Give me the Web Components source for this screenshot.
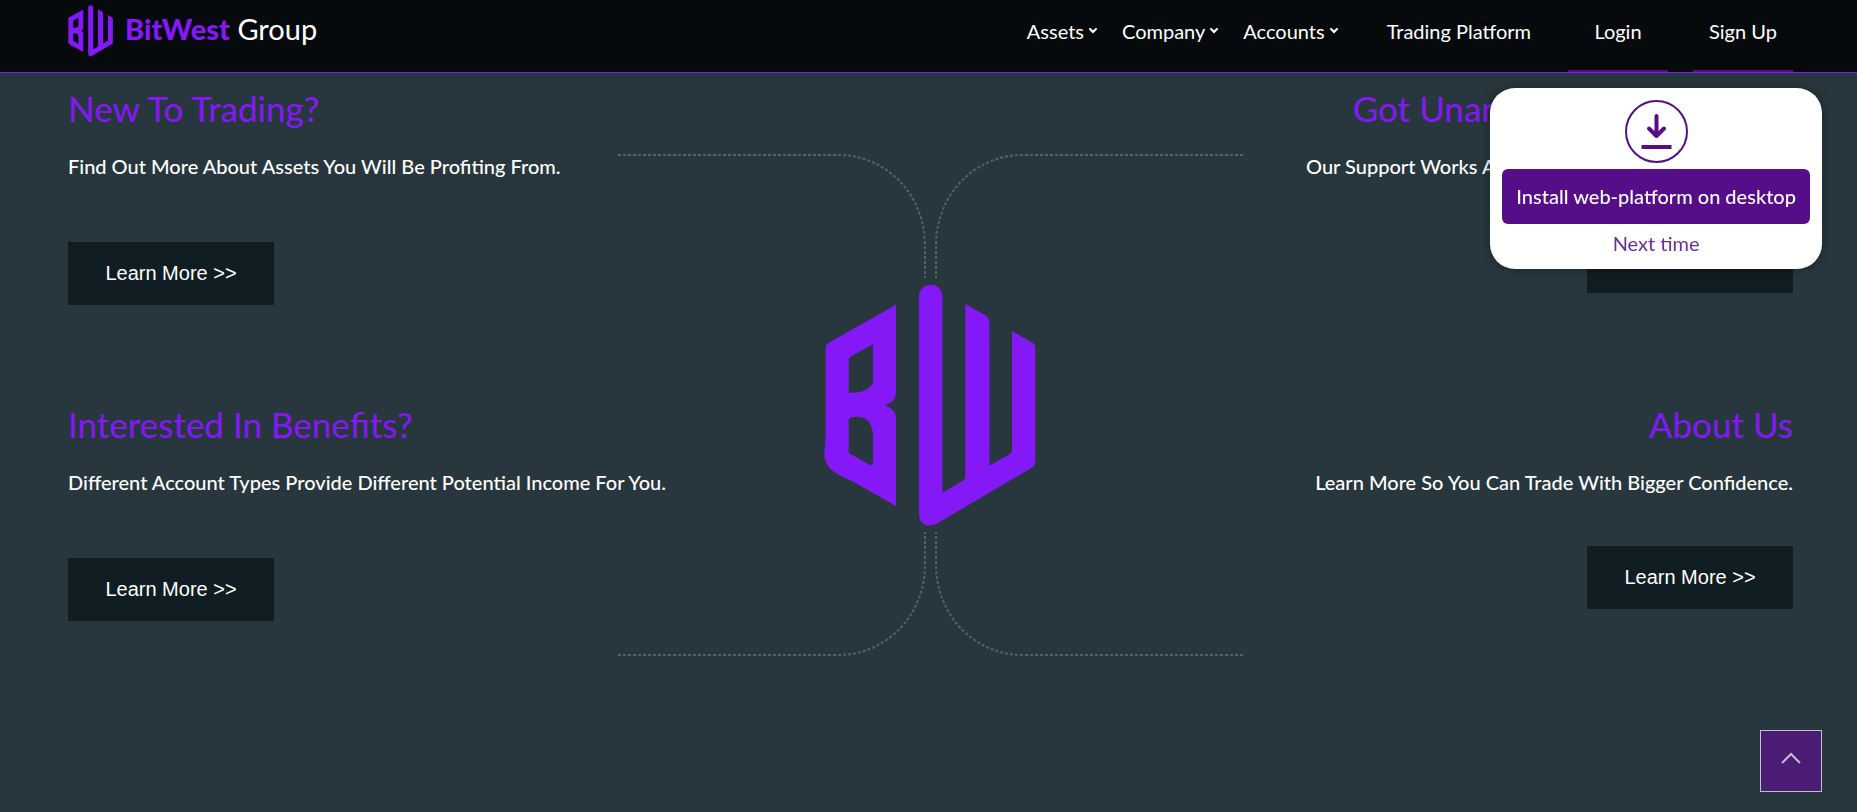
<!DOCTYPE html>
<html lang="en">
<head>
    <meta charset="UTF-8">
    <meta name="viewport" content="width=device-width, initial-scale=1.0">
    <title>BitWest Group</title>
    <style>
        body {
            margin: 0;
            min-height: 100vh;
            font-family: Lato, "Liberation Sans", sans-serif;
            font-size: 20px;
            color: white;
            background-color: #28373e;
            --purple: #8518f7;
            --deep-purple: #550e88;
        }
    </style>
</head>
<body>
    <site-header></site-header>

    <main>
        <info-section>
            <info-card>
                <span slot="title">New To Trading?</span>
                Find Out More About Assets You Will Be Profiting From.
            </info-card>
            <info-card align="right">
                <span slot="title">Got Unanswered Questions?</span>
                Our Support Works Around The Clock To Help You Out.
            </info-card>
            <info-card>
                <span slot="title">Interested In Benefits?</span>
                Different Account Types Provide Different Potential Income For You.
            </info-card>
            <info-card align="right">
                <span slot="title">About Us</span>
                Learn More So You Can Trade With Bigger Confidence.
            </info-card>
        </info-section>
    </main>

    <install-popup>Install web-platform on desktop</install-popup>
    <scroll-top></scroll-top>

    <script>
        // BW emblem, used in the header and in the middle of the section
        class BwLogo extends HTMLElement {
            constructor() {
                super();
                this.attachShadow({ mode: 'open' });
            }

            connectedCallback() {
                this.shadowRoot.innerHTML = `
                <style>
                    :host {
                        display: block;
                        color: var(--purple);
                    }

                    svg {
                        display: block;
                        width: 100%;
                    }
                </style>
                <svg viewBox="72 68 636 726" fill="currentColor" aria-hidden="true">
                    <path fill-rule="evenodd" d="M288 130V396Q286 424 254 432Q284 442 288 466V734L168 666L128 646Q74 622 73 580L77 524V262Q77 250 86 244ZM219 249L154 285Q146 289 146 296V394Q200 398 219 366ZM146 474V570Q146 574 150 577L212 612L219 610V524Q217 464 168 466Q150 467 146 474Z"/>
                    <path d="M357 105A35 35 0 0 1 427 105V694L486 660Q496 654 496 640V128L556 162Q568 170 568 184V613L630 578Q636 574 636 568V210L698 244Q706 249 706 260V598Q706 612 694 620L412 786Q396 795 380 792Q357 786 357 756Z"/>
                </svg>
                `;
            }
        }

        class NavItem extends HTMLElement {
            constructor() {
                super();
                this.attachShadow({ mode: 'open' });
            }

            connectedCallback() {
                const arrow = this.hasAttribute('menu')
                    ? '<svg viewBox="0 0 8 6" aria-hidden="true"><path d="M1 1L4 4L7 1"/></svg>'
                    : '';

                this.shadowRoot.innerHTML = `
                <style>
                    :host {
                        display: flex;
                    }

                    a {
                        display: flex;
                        align-items: center;
                        justify-content: center;
                        gap: 5px;
                        box-sizing: border-box;
                        padding-bottom: 10px;
                        color: white;
                        text-decoration: none;
                        white-space: nowrap;
                    }

                    :host([wide]) a {
                        padding-left: 24px;
                        padding-right: 12px;
                    }

                    :host([underline]) a {
                        width: 100px;
                        padding-bottom: 8px;
                        border-bottom: 2px solid var(--deep-purple);
                    }

                    svg {
                        width: 8px;
                        height: 6px;
                        fill: none;
                        stroke: currentColor;
                        stroke-width: 2;
                        stroke-linecap: round;
                    }
                </style>
                <a href="#"><slot></slot>${arrow}</a>
                `;
            }
        }

        class SiteHeader extends HTMLElement {
            constructor() {
                super();
                this.attachShadow({ mode: 'open' });
            }

            connectedCallback() {
                this.shadowRoot.innerHTML = `
                <style>
                    :host {
                        display: block;
                    }

                    header {
                        display: flex;
                        justify-content: space-between;
                        height: 72px;
                        padding: 0 64px 0 68px;
                        background-color: #070a0d;
                        border-bottom: 1px solid var(--purple);
                    }

                    .brand {
                        display: flex;
                        align-items: center;
                        gap: 12px;
                        padding-bottom: 10px;
                        color: white;
                        font-size: 29px;
                        text-decoration: none;
                        white-space: nowrap;
                    }

                    .brand bw-logo {
                        width: 45px;
                    }

                    .brand span {
                        padding-bottom: 6px;
                    }

                    .brand b {
                        color: var(--purple);
                        font-weight: 900;
                    }

                    nav {
                        display: flex;
                        gap: 25px;
                    }
                </style>
                <header>
                    <a class="brand" href="#">
                        <bw-logo></bw-logo>
                        <span><b>BitWest</b> Group</span>
                    </a>
                    <nav>
                        <nav-item menu>Assets</nav-item>
                        <nav-item menu>Company</nav-item>
                        <nav-item menu>Accounts</nav-item>
                        <nav-item wide>Trading Platform</nav-item>
                        <nav-item underline>Login</nav-item>
                        <nav-item underline>Sign Up</nav-item>
                    </nav>
                </header>
                `;
            }
        }

        class InfoCard extends HTMLElement {
            constructor() {
                super();
                this.attachShadow({ mode: 'open' });
            }

            connectedCallback() {
                this.shadowRoot.innerHTML = `
                <style>
                    :host {
                        display: flex;
                        flex-direction: column;
                        align-items: flex-start;
                    }

                    :host([align='right']) {
                        align-items: flex-end;
                        text-align: right;
                    }

                    h2 {
                        margin: 0 0 23px;
                        color: var(--purple);
                        font-size: 35px;
                        font-weight: 400;
                        line-height: 40px;
                    }

                    p {
                        margin: 0 0 61px;
                        font-weight: 500;
                        line-height: 30px;
                    }

                    :host([align='right']) p {
                        margin-bottom: 49px;
                    }

                    button {
                        min-width: 206px;
                        padding: 20px 37px;
                        border: none;
                        background-color: #101d22;
                        color: white;
                        font-family: "Liberation Sans", Arial, sans-serif;
                        font-size: 20px;
                        line-height: 23px;
                        cursor: pointer;
                    }
                </style>
                <h2><slot name="title"></slot></h2>
                <p><slot></slot></p>
                <button type="button">Learn More &gt;&gt;</button>
                `;
            }
        }

        class InfoSection extends HTMLElement {
            constructor() {
                super();
                this.attachShadow({ mode: 'open' });
            }

            connectedCallback() {
                this.shadowRoot.innerHTML = `
                <style>
                    :host {
                        display: grid;
                        grid-template-columns: 1fr 1fr;
                        grid-auto-rows: 316px;
                        padding: 15px 64px 0 68px;
                    }

                    /* The emblem and its lines share the cells of the cards */
                    .hub {
                        display: grid;
                        grid-area: 1 / 1 / 3 / 3;
                        place-items: center;
                        justify-self: center;
                        align-self: start;
                        margin-top: 66px;
                    }

                    .hub > * {
                        grid-area: 1 / 1;
                    }

                    .lines {
                        width: 625px;
                        height: 502px;
                        fill: none;
                        stroke: #526068;
                        stroke-width: 2;
                        stroke-dasharray: 3 2;
                    }

                    bw-logo {
                        width: 212px;
                        padding: 0 1px 1px 0;
                    }

                    ::slotted(info-card:nth-child(odd)) {
                        grid-column: 1;
                    }

                    ::slotted(info-card:nth-child(even)) {
                        grid-column: 2;
                    }

                    ::slotted(info-card:nth-child(-n + 2)) {
                        grid-row: 1;
                    }

                    ::slotted(info-card:nth-child(n + 3)) {
                        grid-row: 2;
                    }
                </style>
                <div class="hub">
                    <svg class="lines" viewBox="0 0 625 502" aria-hidden="true">
                        <path d="M0 1H220C268 1 307 40 307 92V124"/>
                        <path d="M625 1H405C357 1 318 40 318 92V124"/>
                        <path d="M0 501H220C268 501 307 462 307 410V378"/>
                        <path d="M625 501H405C357 501 318 462 318 410V378"/>
                    </svg>
                    <bw-logo></bw-logo>
                </div>
                <slot></slot>
                `;
            }
        }

        class InstallPopup extends HTMLElement {
            constructor() {
                super();
                this.attachShadow({ mode: 'open' });
            }

            connectedCallback() {
                this.shadowRoot.innerHTML = `
                <style>
                    :host {
                        position: fixed;
                        top: 88px;
                        right: 35px;
                        display: flex;
                        flex-direction: column;
                        align-items: center;
                        padding: 12px;
                        border-radius: 25px;
                        background-color: white;
                        box-shadow: 0 0 12px rgba(0, 0, 0, 0.35);
                    }

                    svg {
                        width: 63px;
                        height: 63px;
                        margin-bottom: 6px;
                        fill: none;
                        stroke: var(--deep-purple);
                    }

                    button {
                        border: none;
                        font-family: inherit;
                        font-size: 20px;
                        cursor: pointer;
                    }

                    .install {
                        padding: 15px 14px;
                        border-radius: 6px;
                        background-color: var(--deep-purple);
                        color: white;
                        font-weight: 500;
                        line-height: 25px;
                    }

                    .later {
                        margin: 7px 0 1px;
                        padding: 0;
                        background: none;
                        color: #6a2e98;
                        line-height: 25px;
                    }
                </style>
                <svg viewBox="0 0 63 63" aria-hidden="true">
                    <circle cx="31.5" cy="31.5" r="30.5" stroke-width="2"/>
                    <path d="M31.5 16V35M24 28.5L31.5 36L39 28.5" stroke-width="4" stroke-linecap="round" stroke-linejoin="round"/>
                    <path d="M16.5 47H46.5" stroke-width="4"/>
                </svg>
                <button class="install" type="button"><slot></slot></button>
                <button class="later" type="button">Next time</button>
                `;

                this.shadowRoot.querySelector('.later').addEventListener('click', () => this.remove());
            }
        }

        class ScrollTop extends HTMLElement {
            constructor() {
                super();
                this.attachShadow({ mode: 'open' });
            }

            connectedCallback() {
                this.shadowRoot.innerHTML = `
                <style>
                    :host {
                        position: fixed;
                        right: 35px;
                        bottom: 20px;
                        display: block;
                    }

                    button {
                        display: grid;
                        place-items: center;
                        width: 62px;
                        height: 62px;
                        padding: 0 0 6px;
                        border: 1px solid #bec3c5;
                        background-color: #4a1c73;
                        cursor: pointer;
                    }

                    svg {
                        width: 20px;
                        height: 12px;
                        fill: none;
                        stroke: #bec3c5;
                        stroke-width: 2;
                    }
                </style>
                <button type="button" aria-label="Back to top">
                    <svg viewBox="0 0 20 12"><path d="M1 11L10 2L19 11"/></svg>
                </button>
                `;

                this.shadowRoot.querySelector('button').addEventListener('click', () => {
                    window.scrollTo({ top: 0, behavior: 'smooth' });
                });
            }
        }

        customElements.define('bw-logo', BwLogo);
        customElements.define('nav-item', NavItem);
        customElements.define('site-header', SiteHeader);
        customElements.define('info-card', InfoCard);
        customElements.define('info-section', InfoSection);
        customElements.define('install-popup', InstallPopup);
        customElements.define('scroll-top', ScrollTop);
    </script>
</body>
</html>
